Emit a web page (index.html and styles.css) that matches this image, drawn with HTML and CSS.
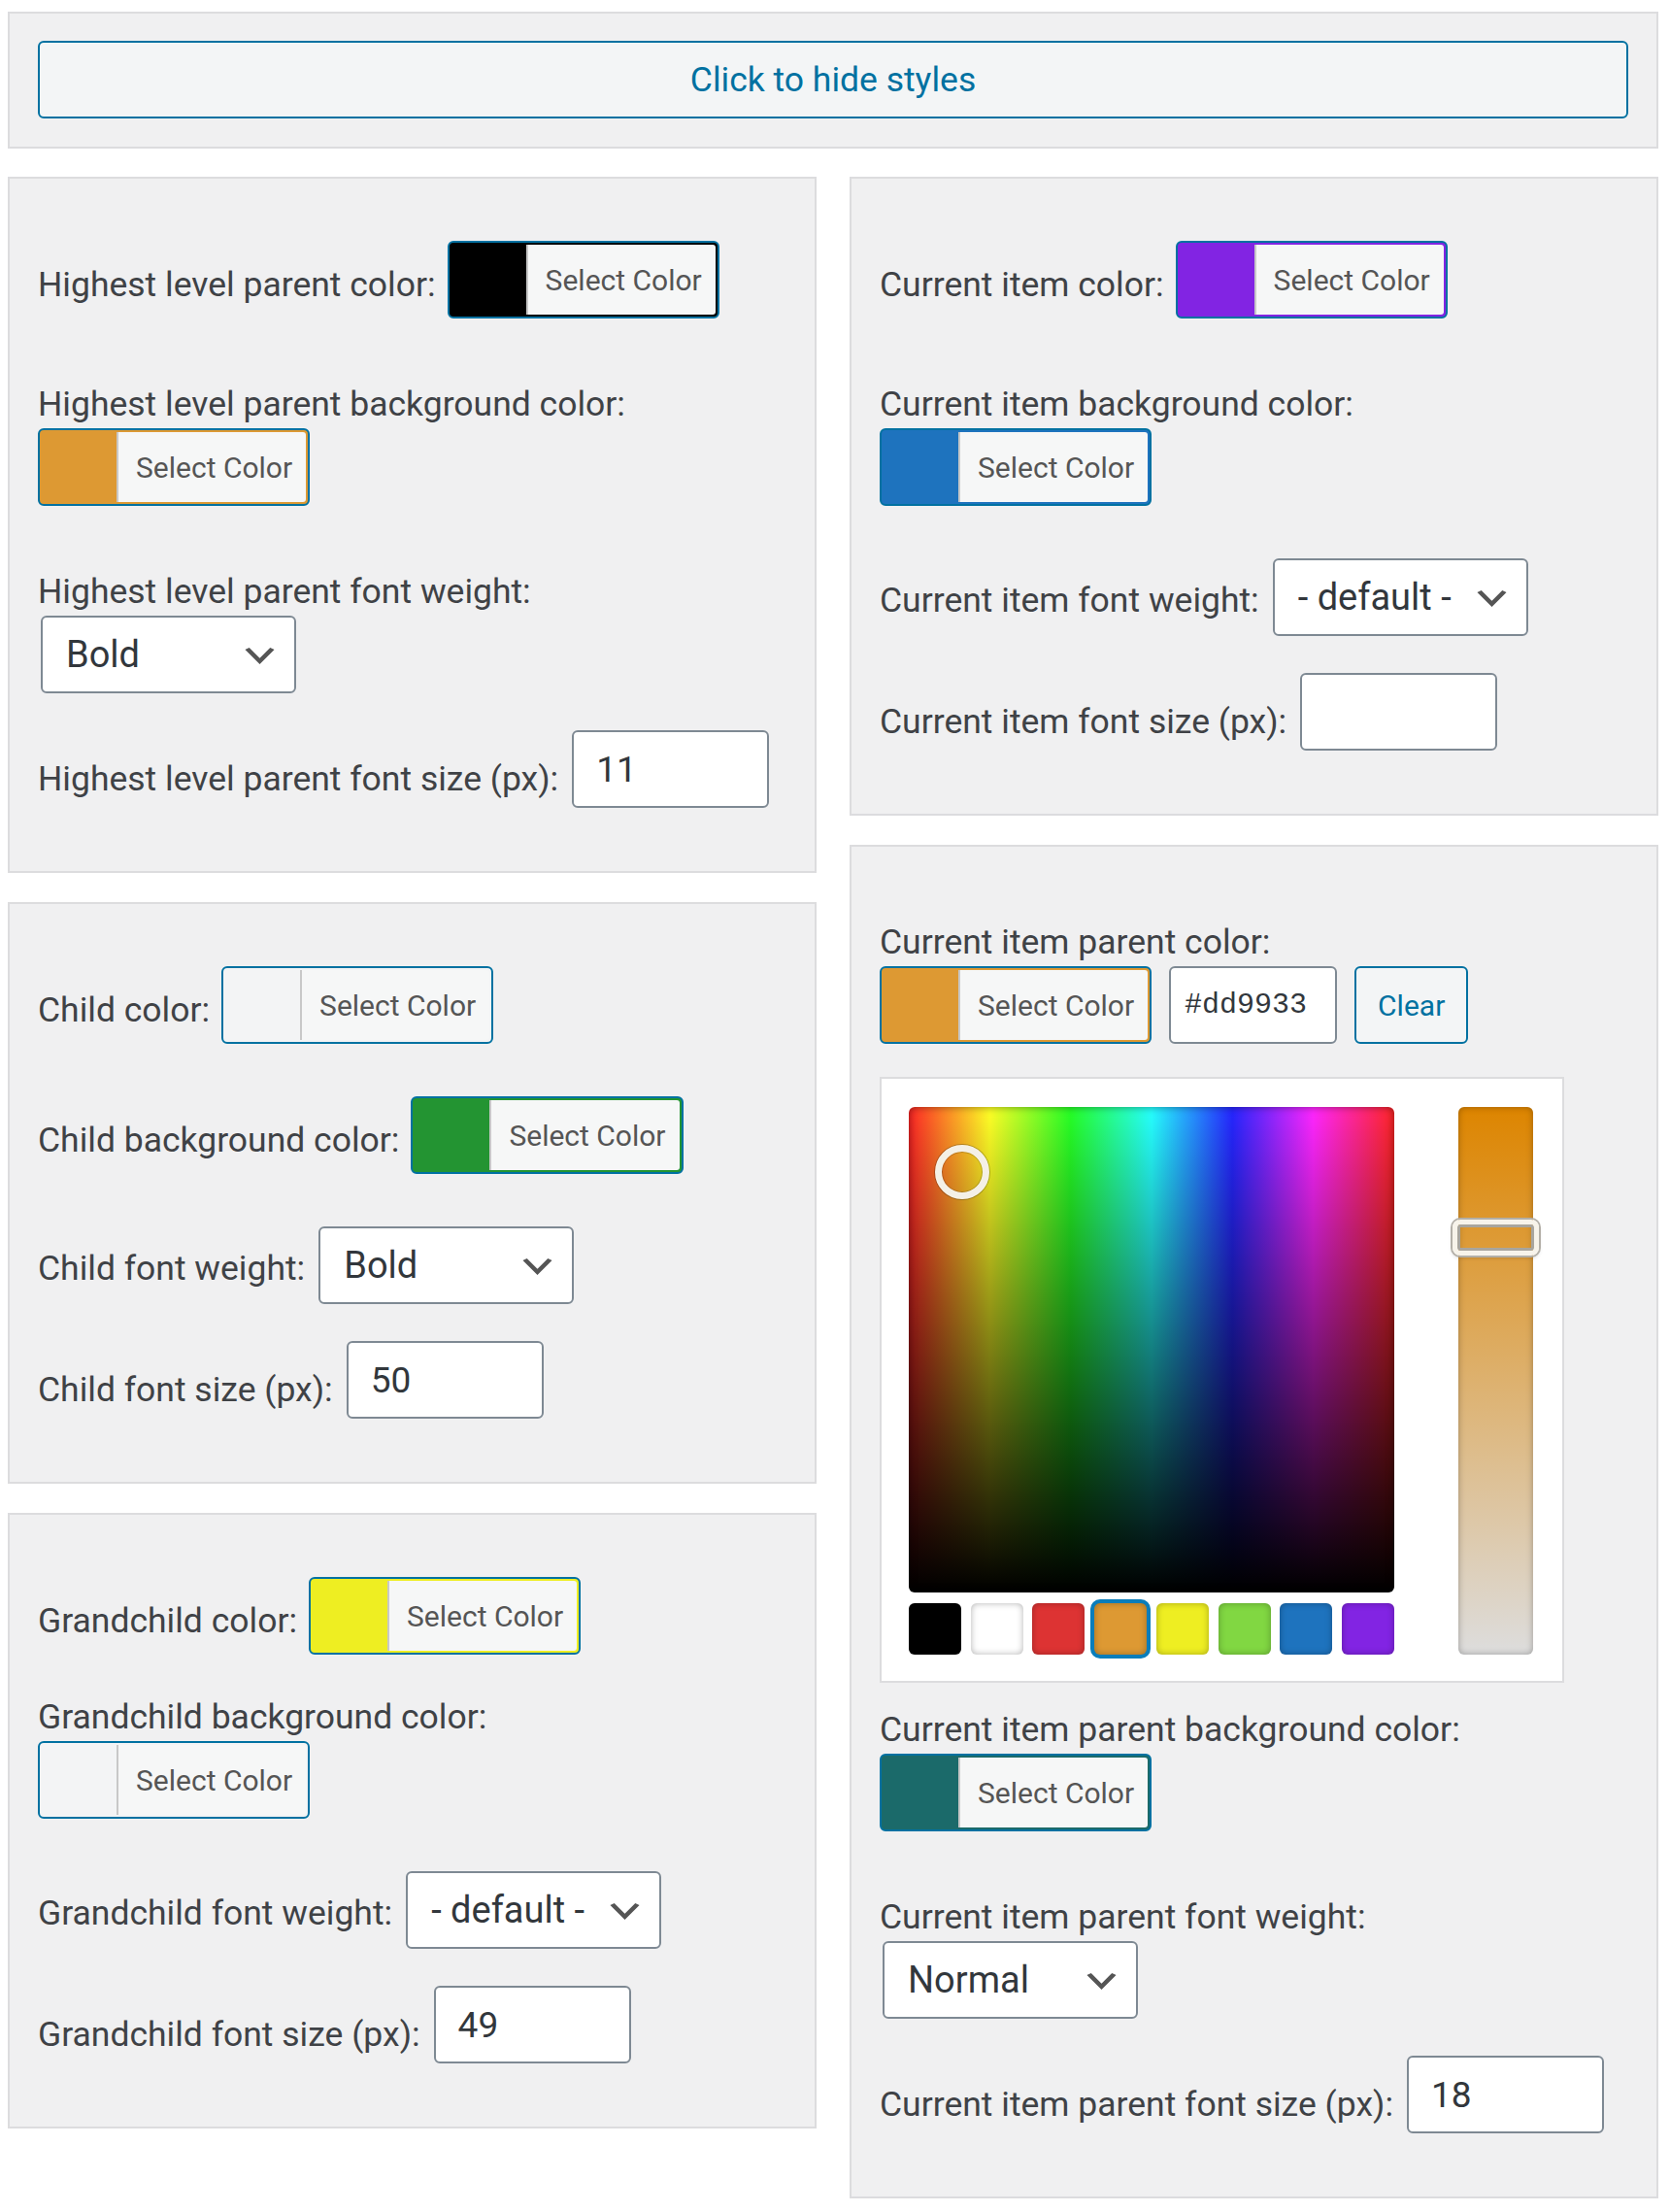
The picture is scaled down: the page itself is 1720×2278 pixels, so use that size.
FILE: index.html
```html
<!DOCTYPE html>
<html lang="en">
<head>
<meta charset="utf-8">
<title>Menu styles</title>
<link rel="stylesheet" href="styles.css">
</head>
<body>
<div class="page">
  <div class="panel toggle-panel">
    <button class="toggle" type="button">Click to hide styles</button>
  </div>

  <div class="columns">
    <div class="col">
      <section class="panel">
        <div class="field row k-color">
          <label>Highest level parent color:</label>
          <div class="cpick"><button class="cbtn" type="button" style="--c:#000000"><span class="sw"></span><span class="txt">Select Color</span></button></div>
        </div>
        <div class="field stack">
          <label>Highest level parent background color:</label>
          <div class="cpick"><button class="cbtn" type="button" style="--c:#dd9933"><span class="sw"></span><span class="txt">Select Color</span></button></div>
        </div>
        <div class="field stack">
          <label>Highest level parent font weight:</label>
          <span class="selwrap"><select><option>Bold</option></select><svg class="chev" viewBox="0 0 20 20"><path d="M5 6l5 5 5-5 2 1-7 7-7-7 2-1z"/></svg></span>
        </div>
        <div class="field row k-input">
          <label>Highest level parent font size (px):</label>
          <input class="num" type="text" value="11">
        </div>
      </section>

      <section class="panel">
        <div class="field row k-color">
          <label>Child color:</label>
          <div class="cpick"><button class="cbtn" type="button" style="--c:#f3f4f5"><span class="sw"></span><span class="txt">Select Color</span></button></div>
        </div>
        <div class="field row k-color">
          <label>Child background color:</label>
          <div class="cpick"><button class="cbtn" type="button" style="--c:#239432"><span class="sw"></span><span class="txt">Select Color</span></button></div>
        </div>
        <div class="field row k-select">
          <label>Child font weight:</label>
          <span class="selwrap"><select><option>Bold</option></select><svg class="chev" viewBox="0 0 20 20"><path d="M5 6l5 5 5-5 2 1-7 7-7-7 2-1z"/></svg></span>
        </div>
        <div class="field row k-input">
          <label>Child font size (px):</label>
          <input class="num" type="text" value="50">
        </div>
      </section>

      <section class="panel">
        <div class="field row k-color">
          <label>Grandchild color:</label>
          <div class="cpick"><button class="cbtn" type="button" style="--c:#eeee22"><span class="sw"></span><span class="txt">Select Color</span></button></div>
        </div>
        <div class="field stack tight">
          <label>Grandchild background color:</label>
          <div class="cpick"><button class="cbtn" type="button" style="--c:#f3f4f5"><span class="sw"></span><span class="txt">Select Color</span></button></div>
        </div>
        <div class="field row k-select">
          <label>Grandchild font weight:</label>
          <span class="selwrap"><select><option>- default -</option></select><svg class="chev" viewBox="0 0 20 20"><path d="M5 6l5 5 5-5 2 1-7 7-7-7 2-1z"/></svg></span>
        </div>
        <div class="field row k-input">
          <label>Grandchild font size (px):</label>
          <input class="num" type="text" value="49">
        </div>
      </section>
    </div>

    <div class="col">
      <section class="panel">
        <div class="field row k-color">
          <label>Current item color:</label>
          <div class="cpick"><button class="cbtn" type="button" style="--c:#8224e3"><span class="sw"></span><span class="txt">Select Color</span></button></div>
        </div>
        <div class="field stack">
          <label>Current item background color:</label>
          <div class="cpick"><button class="cbtn" type="button" style="--c:#1e73be"><span class="sw"></span><span class="txt">Select Color</span></button></div>
        </div>
        <div class="field row k-select">
          <label>Current item font weight:</label>
          <span class="selwrap"><select><option>- default -</option></select><svg class="chev" viewBox="0 0 20 20"><path d="M5 6l5 5 5-5 2 1-7 7-7-7 2-1z"/></svg></span>
        </div>
        <div class="field row k-input">
          <label>Current item font size (px):</label>
          <input class="num" type="text" value="">
        </div>
      </section>

      <section class="panel">
        <div class="field stack">
          <label>Current item parent color:</label>
          <div class="cpick">
            <button class="cbtn" type="button" style="--c:#dd9933"><span class="sw"></span><span class="txt">Select Color</span></button>
            <input class="hex" type="text" value="#dd9933">
            <button class="clear" type="button">Clear</button>
          </div>
          <div class="iris">
            <div class="iris-main">
              <div class="square"><span class="marker"></span></div>
              <div class="palette">
                <span class="pal" style="--c:#000000"></span>
                <span class="pal" style="--c:#ffffff"></span>
                <span class="pal" style="--c:#dd3333"></span>
                <span class="pal active" style="--c:#dd9933"></span>
                <span class="pal" style="--c:#eeee22"></span>
                <span class="pal" style="--c:#81d742"></span>
                <span class="pal" style="--c:#1e73be"></span>
                <span class="pal" style="--c:#8224e3"></span>
              </div>
            </div>
            <div class="strip"><span class="handle"></span></div>
          </div>
        </div>
        <div class="field stack tight">
          <label>Current item parent background color:</label>
          <div class="cpick"><button class="cbtn" type="button" style="--c:#1b6a6a"><span class="sw"></span><span class="txt">Select Color</span></button></div>
        </div>
        <div class="field stack">
          <label>Current item parent font weight:</label>
          <span class="selwrap"><select><option>Normal</option></select><svg class="chev" viewBox="0 0 20 20"><path d="M5 6l5 5 5-5 2 1-7 7-7-7 2-1z"/></svg></span>
        </div>
        <div class="field row k-input">
          <label>Current item parent font size (px):</label>
          <input class="num" type="text" value="18">
        </div>
      </section>
    </div>
  </div>
</div>
</body>
</html>
```

FILE: styles.css
```css
* { box-sizing: border-box; }

body {
  margin: 12px 12px 12px 8px;
  background: #ffffff;
  font-family: Roboto, "Liberation Sans", sans-serif;
  color: #444444;
}

.page { width: 1700px; }

.panel {
  background: #f0f0f1;
  border: 2px solid #dcdcde;
  padding: 64px 29px 65px;
}

.toggle-panel {
  padding: 28px 29px 29px;
  margin-bottom: 29px;
}

.toggle {
  display: block;
  width: 100%;
  height: 80px;
  border: 2px solid #0071a1;
  border-radius: 6px;
  background: #f3f5f6;
  color: #0071a1;
  font-family: Roboto, "Liberation Sans", sans-serif;
  font-size: 35.5px;
  cursor: pointer;
}

.columns {
  display: flex;
  justify-content: space-between;
  align-items: flex-start;
}

.col {
  width: 833px;
  display: flex;
  flex-direction: column;
  gap: 30px;
}

/* fields */
.field label {
  font-size: 35.5px;
  line-height: 44px;
  color: #3f4246;
  white-space: nowrap;
}

.field + .field { margin-top: 38px; }
.field.tight { margin-top: 14px; }

.row {
  display: flex;
  align-items: flex-start;
  flex-wrap: nowrap;
}
.row > label { margin-right: 12px; }
.row.k-color > label { margin-top: 23px; }
.row.k-select > label { margin-top: 21px; }
.row.k-input > label { margin-top: 28px; }

.stack {
  display: flow-root;
  padding-top: 12px;
}
.stack > label {
  display: block;
  margin-bottom: 3px;
}

/* color picker button */
.cpick {
  display: flex;
  align-items: flex-start;
  gap: 18px;
  margin-bottom: 16px;
}

.cbtn {
  display: inline-flex;
  align-items: stretch;
  height: 80px;
  padding: 2px 2px 2px 0;
  border: 2px solid #0071a1;
  border-radius: 6px;
  background: var(--c);
  font-family: Roboto, "Liberation Sans", sans-serif;
  cursor: pointer;
}
.cbtn .sw { width: 79px; }
.cbtn .txt {
  display: flex;
  align-items: center;
  padding: 0 14px 0 18px;
  border-left: 2px solid #c8c8c8;
  border-radius: 0 3px 3px 0;
  background: #f6f7f7;
  color: #555555;
  font-size: 30px;
  white-space: nowrap;
}

.hex {
  width: 173px;
  height: 80px;
  padding: 0 14px;
  border: 2px solid #7e8993;
  border-radius: 6px;
  background: #ffffff;
  color: #32373c;
  font-family: "Liberation Mono", "DejaVu Sans Mono", monospace;
  font-size: 30px;
}

.clear {
  height: 80px;
  padding: 0 22px;
  border: 2px solid #0071a1;
  border-radius: 6px;
  background: #f3f5f6;
  color: #0071a1;
  font-family: Roboto, "Liberation Sans", sans-serif;
  font-size: 30px;
  cursor: pointer;
}

/* select */
.selwrap {
  position: relative;
  display: inline-block;
  margin-left: 2px;
  height: 80px;
}
.stack .selwrap { margin-left: 3px; }
.selwrap select {
  -webkit-appearance: none;
  appearance: none;
  display: block;
  width: 263px;
  height: 80px;
  padding: 0 60px 0 24px;
  border: 2px solid #7e8993;
  border-radius: 6px;
  background: #ffffff;
  color: #32373c;
  font-family: Roboto, "Liberation Sans", sans-serif;
  font-size: 38px;
}
.chev {
  position: absolute;
  right: 16px;
  top: 20px;
  width: 43px;
  height: 43px;
  fill: #555555;
  pointer-events: none;
}

/* number input */
.num {
  width: 203px;
  height: 80px;
  margin-left: 2px;
  padding: 0 23px;
  border: 2px solid #7e8993;
  border-radius: 6px;
  background: #ffffff;
  color: #32373c;
  font-family: Roboto, "Liberation Sans", sans-serif;
  font-size: 37px;
}

/* iris picker */
.iris {
  display: flex;
  gap: 66px;
  width: 705px;
  margin-top: 34px;
  padding: 29px 30px 27px 28px;
  border: 2px solid #dcdcde;
  background: #ffffff;
}
.iris-main { width: 500px; }

.square {
  position: relative;
  width: 500px;
  height: 500px;
  border-radius: 6px;
  background:
    linear-gradient(to bottom, rgba(0,0,0,0) 0%, rgba(0,0,0,1) 100%),
    linear-gradient(rgba(255,255,255,0.15), rgba(255,255,255,0.15)),
    linear-gradient(to right, #ff0000 0%, #ffff00 16.67%, #00ff00 33.33%, #00ffff 50%, #0000ff 66.67%, #ff00ff 83.33%, #ff0000 100%);
  box-shadow: inset 0 0 8px rgba(0,0,0,0.45);
}
.marker {
  position: absolute;
  left: 27px;
  top: 39px;
  width: 56px;
  height: 56px;
  border: 7px solid #f4f0e6;
  border-radius: 50%;
  box-shadow: 0 0 0 1px rgba(0,0,0,0.25), inset 0 0 0 1px rgba(0,0,0,0.2);
}

.palette {
  display: flex;
  justify-content: space-between;
  margin-top: 11px;
}
.pal {
  width: 54px;
  height: 53px;
  border-radius: 6px;
  background: var(--c);
  box-shadow: inset 0 0 7px rgba(0,0,0,0.3);
}
.pal.active {
  box-shadow: 0 0 0 4px #0a7dba, inset 0 0 7px rgba(0,0,0,0.3);
}

.strip {
  position: relative;
  width: 77px;
  height: 564px;
  border-radius: 6px;
  background: linear-gradient(to bottom, #dd8500 0%, #dddddd 100%);
  box-shadow: inset 0 0 7px rgba(0,0,0,0.3);
}
.handle {
  position: absolute;
  left: -6px;
  top: 116px;
  width: 89px;
  height: 37px;
  border: 5px solid #f7f3ea;
  border-radius: 8px;
  box-shadow: 0 0 0 2px #b3afa7, inset 0 0 0 3px #a9a59d, 0 2px 4px rgba(0,0,0,0.2);
}
```
